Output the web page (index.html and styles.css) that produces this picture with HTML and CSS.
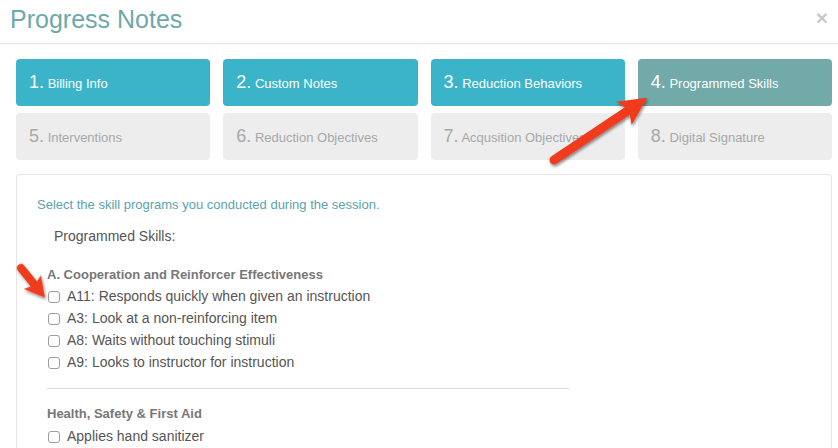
FILE: index.html
```html
<!DOCTYPE html>
<html>
<head>
<meta charset="utf-8">
<link rel="stylesheet" href="styles.css">
</head>
<body>
<div class="modal">
  <header class="modal-header">
    <h1 class="title">Progress Notes</h1>
    <span class="close">×</span>
  </header>
  <nav class="steps">
    <div class="step done"><span class="num">1.</span> Billing Info</div>
    <div class="step done"><span class="num">2.</span> Custom Notes</div>
    <div class="step done"><span class="num">3.</span> Reduction Behaviors</div>
    <div class="step active"><span class="num">4.</span> Programmed Skills</div>
    <div class="step todo"><span class="num">5.</span> Interventions</div>
    <div class="step todo"><span class="num">6.</span> Reduction Objectives</div>
    <div class="step todo"><span class="num">7.</span> Acqusition Objectives</div>
    <div class="step todo"><span class="num">8.</span> Digital Signature</div>
  </nav>
  <section class="card">
    <p class="hint">Select the skill programs you conducted during the session.</p>
    <p class="section-label">Programmed Skills:</p>
    <div class="group">
      <h3 class="group-title">A. Cooperation and Reinforcer Effectiveness</h3>
      <label class="item"><input type="checkbox" class="cb"><span>A11: Responds quickly when given an instruction</span></label>
      <label class="item"><input type="checkbox" class="cb"><span>A3: Look at a non-reinforcing item</span></label>
      <label class="item"><input type="checkbox" class="cb"><span>A8: Waits without touching stimuli</span></label>
      <label class="item"><input type="checkbox" class="cb"><span>A9: Looks to instructor for instruction</span></label>
      <hr class="divider">
      <h3 class="group-title second">Health, Safety &amp; First Aid</h3>
      <label class="item"><input type="checkbox" class="cb"><span>Applies hand sanitizer</span></label>
    </div>
  </section>
</div>
<svg class="annotations" width="838" height="448" viewBox="0 0 838 448">
  <defs>
    <filter id="shadow" x="-30%" y="-30%" width="160%" height="160%">
      <feDropShadow dx="1" dy="2" stdDeviation="1.6" flood-color="#000" flood-opacity="0.45"/>
    </filter>
  </defs>
  <g filter="url(#shadow)" fill="#f03a1c" stroke="#f03a1c">
    <g transform="translate(554 160) rotate(-33.7)">
      <line x1="0" y1="0" x2="90" y2="0" stroke-width="9" stroke-linecap="round"/>
      <path d="M112 0 L84 -14 L90 0 L84 14 Z" stroke="none"/>
    </g>
    <g transform="translate(21 268) rotate(51)">
      <line x1="0" y1="0" x2="22" y2="0" stroke-width="8" stroke-linecap="round"/>
      <path d="M38 0 L18 -11 L22 0 L18 11 Z" stroke="none"/>
    </g>
  </g>
</svg>
</body>
</html>
```
FILE: styles.css
```css
* { box-sizing: border-box; }
html, body {
  margin: 0;
  padding: 0;
  background: #fff;
  overflow: hidden;
}
body {
  font-family: "Liberation Sans", Arial, Helvetica, sans-serif;
  width: 838px;
  height: 448px;
  position: relative;
}
.modal {
  height: 448px;
  display: flex;
  flex-direction: column;
}
.modal-header {
  flex: none;
  height: 44px;
  border-bottom: 1px solid #e5e5e5;
  display: flex;
  justify-content: space-between;
  align-items: flex-start;
  padding: 0 10px 0 10px;
}
.title {
  margin: 0;
  font-size: 25px;
  line-height: 39px;
  font-weight: normal;
  color: #6ea9aa;
}
.close {
  font-size: 21px;
  font-weight: bold;
  color: #c9c9c9;
  line-height: 36px;
}
.steps {
  flex: none;
  display: grid;
  grid-template-columns: repeat(4, 1fr);
  column-gap: 13px;
  row-gap: 7px;
  margin: 15px 6px 0 16px;
}
.step {
  height: 47px;
  border-radius: 4px;
  display: flex;
  align-items: baseline;
  padding: 12px 0 0 13px;
  font-size: 13px;
  line-height: 22px;
  white-space: pre;
  overflow: hidden;
}
.step .num {
  font-size: 18px;
}
.step.done {
  background: #3bb4ca;
  color: #fff;
}
.step.active {
  background: #72a9a9;
  color: #fff;
}
.step.todo {
  background: #ededed;
  color: #a8a8a8;
}
.card {
  flex: 1;
  min-height: 0;
  overflow: hidden;
  margin: 14px 6px 0 16px;
  border: 1px solid #e6e6e6;
  border-bottom: 0;
  border-radius: 4px 4px 0 0;
  padding: 20px 20px 0 20px;
}
.hint {
  margin: 0;
  font-size: 13px;
  line-height: 19px;
  color: #5aa3ae;
}
.section-label {
  margin: 12px 0 0 17px;
  font-size: 14px;
  line-height: 20px;
  color: #555;
}
.group {
  margin: 20px 0 0 10px;
}
.group-title {
  margin: 0 0 1px 0;
  font-size: 13px;
  line-height: 18px;
  font-weight: bold;
  color: #777;
}
.group-title.second {
  margin-top: 16px;
  margin-bottom: 2px;
}
.item {
  display: flex;
  align-items: center;
  height: 22px;
  font-size: 14px;
  color: #555;
}
.cb {
  appearance: none;
  -webkit-appearance: none;
  width: 12px;
  height: 12px;
  margin: 1px 7px 0 1px;
  border: 1px solid #9d9d9d;
  border-radius: 3px;
  background: #fff;
}
.divider {
  margin: 15px 0 0 0;
  width: 522px;
  border: 0;
  border-top: 1px solid #dcdcdc;
  height: 0;
}
.annotations {
  position: absolute;
  left: 0;
  top: 0;
  pointer-events: none;
}
```
